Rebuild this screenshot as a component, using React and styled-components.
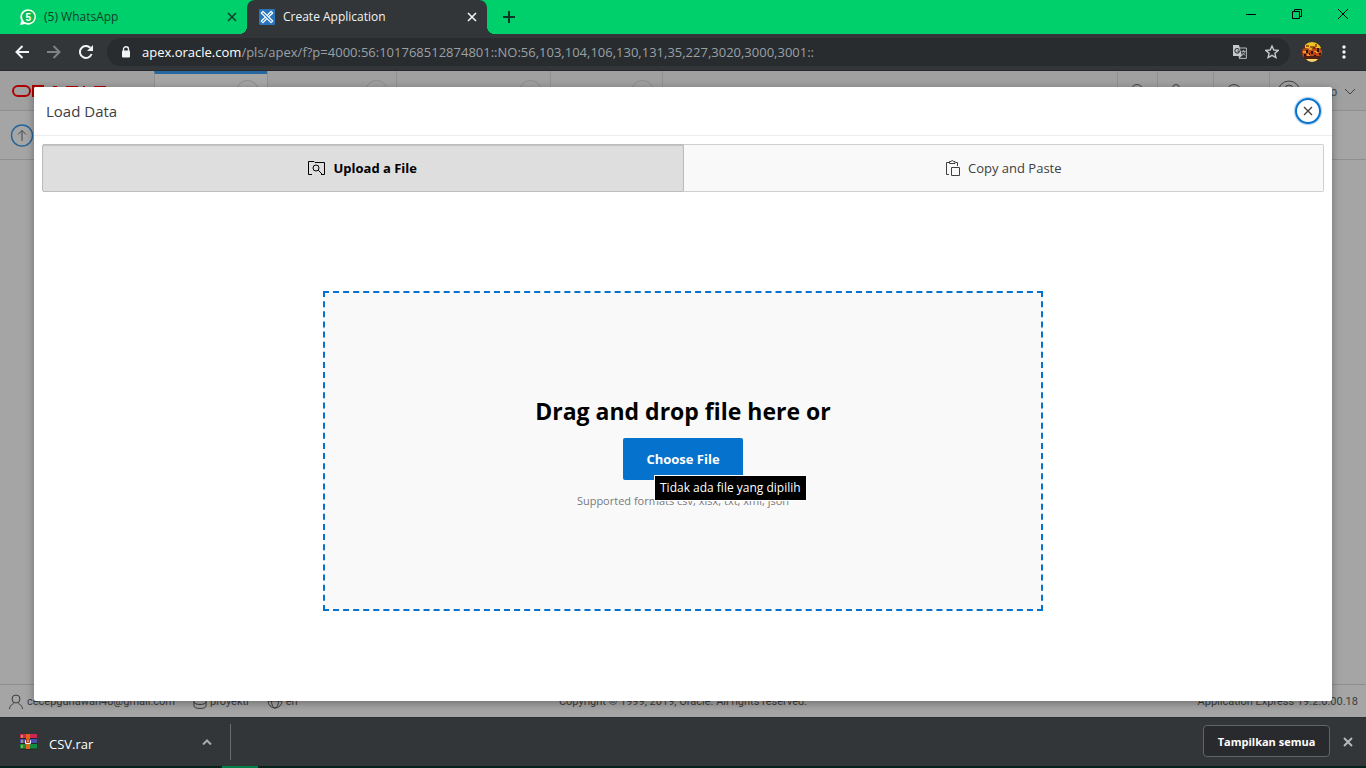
import React from 'react';
import styled, { createGlobalStyle, css } from 'styled-components';

const ui = '"Segoe UI", "Open Sans", "Noto Sans", sans-serif';

const Global = createGlobalStyle`
  *, *::before, *::after { box-sizing: border-box; }
  body { margin: 0; font-family: ${ui}; font-size: 12px; color: #404040; }
  button { font: inherit; color: inherit; border: 0; padding: 0; background: none; }
  a { color: inherit; text-decoration: none; }
  svg { display: block; flex: none; }
`;

const Window = styled.div`
  display: flex;
  flex-direction: column;
  min-height: 100vh;
  background: #323639;
`;

/* Browser frame */
const TabStrip = styled.div`
  display: flex;
  height: 34px;
  background: #00d06c;
`;

const flare = css`
  content: '';
  position: absolute;
  bottom: 0;
  width: 8px;
  height: 8px;
`;

const BrowserTab = styled.div`
  position: relative;
  display: flex;
  align-items: center;
  gap: 8px;
  width: ${(p) => (p.$active ? 240 : 247)}px;
  padding: 0 10px 0 ${(p) => (p.$active ? 12 : 20)}px;
  font-size: 12px;
  line-height: 16px;
  color: #123f29;
  ${(p) => p.$active && css`
    color: #f1f3f4;
    background: #323639;
    border-radius: 8px 8px 0 0;
    &::before { ${flare} left: -8px; background: radial-gradient(circle at 0 0, transparent 8px, #323639 8px); }
    &::after { ${flare} right: -8px; background: radial-gradient(circle at 100% 0, transparent 8px, #323639 8px); }
  `}
`;

const TabTitle = styled.span`
  flex: 1;
`;

const IconButton = styled.button`
  display: flex;
  align-items: center;
  justify-content: center;
  width: ${(p) => p.$w || 32}px;
  height: ${(p) => p.$h || 32}px;
  color: ${(p) => p.$color || 'inherit'};
`;

const NewTab = styled(IconButton)`
  margin-left: 6px;
`;

const WindowButtons = styled.div`
  display: flex;
  margin-left: auto;
`;

const Toolbar = styled.div`
  display: flex;
  align-items: center;
  height: 37px;
  padding: 0 6px;
  color: #f1f3f4;
  border-bottom: 1px solid #27292c;
`;

const AddressBar = styled.div`
  display: flex;
  flex: 1;
  align-items: center;
  height: 28px;
  margin: 0 6px 0 5px;
  padding: 0 2px 0 14px;
  border-radius: 14px;
  background: #282c2f;
`;

const Address = styled.input`
  flex: 1;
  min-width: 0;
  padding: 0;
  border: 0;
  outline: 0;
  background: none;
  font-family: ${ui};
  font-size: 13px;
  color: #9aa0a6;
`;

const Host = styled.label`
  margin-left: 11px;
  font-size: 13px;
  color: #fff;
`;

/* Application page behind the dialog */
const Page = styled.main`
  position: relative;
  display: flex;
  flex: 1;
  flex-direction: column;
  background: #a5a5a5;
  overflow: hidden;
`;

const AppHeader = styled.header`
  display: flex;
  height: 40px;
  background: #a0a0a0;
  border-bottom: 1px solid #8f8f8f;
`;

const Logo = styled.a`
  width: 154px;
  padding: 14px 0 0 12px;
`;

const NavTab = styled.a`
  display: flex;
  justify-content: flex-end;
  width: ${(p) => p.$w}px;
  padding: 9px 8px 0 0;
  border-left: 1px solid #909090;
  ${(p) => p.$last && css`border-right: 1px solid #909090;`}
  ${(p) => p.$active && css`
    background: #a6a6a6;
    padding-top: 6px;
    border-top: 3px solid #2568a0;
  `}
`;

const Ring = styled.span`
  width: 23px;
  height: 23px;
  border: 1px solid #8c8c8c;
  border-radius: 50%;
`;

const HeaderTools = styled.div`
  display: flex;
  margin-left: auto;
  border-left: 1px solid #909090;
`;

const HeaderTool = styled.button`
  display: flex;
  align-items: center;
  justify-content: center;
  width: ${(p) => p.$w}px;
  padding: 2px ${(p) => p.$right || 0}px 0 0;
  border-left: 1px solid #909090;
  &:first-child { border-left: 0; }
`;

const UserMenu = styled(HeaderTool)`
  justify-content: flex-start;
  gap: 4px;
  padding: 2px 10px 0 7px;
`;

const UserName = styled.span`
  margin-left: auto;
  padding-right: 3px;
  color: #404040;
`;

const Breadcrumb = styled.nav`
  height: 49px;
  padding: 13px 10px;
  border-bottom: 1px solid #8f8f8f;
`;

const PageFooter = styled.footer`
  display: grid;
  grid-template-columns: 1fr auto 1fr;
  align-items: center;
  height: 33px;
  margin-top: auto;
  padding: 2px 8px 0;
  border-top: 1px solid #8f8f8f;
  font-family: Roboto, "Open Sans", sans-serif;
  font-size: 11px;
  line-height: 16px;
  color: #3c3c3c;
`;

const FooterInfo = styled.div`
  display: flex;
  gap: 18px;
`;

const FooterItem = styled.span`
  display: flex;
  align-items: center;
  gap: 3px;
`;

const FooterEnd = styled.span`
  text-align: right;
`;

/* Dialog */
const Dialog = styled.section`
  position: absolute;
  inset: 16px 34px;
  display: flex;
  flex-direction: column;
  border-radius: 2px;
  background: #fff;
  box-shadow: 0 2px 8px rgba(0, 0, 0, 0.35);
`;

const DialogHeader = styled.header`
  display: flex;
  align-items: center;
  justify-content: space-between;
  height: 49px;
  padding: 0 11px 0 12px;
  border-bottom: 1px solid #ededed;
`;

const DialogTitle = styled.h1`
  margin: 0;
  font-size: 15px;
  font-weight: 500;
  line-height: 24px;
  color: #404040;
`;

const CloseButton = styled.button`
  display: flex;
  align-items: center;
  justify-content: center;
  width: 26px;
  height: 26px;
  border: 2px solid #0572ce;
  border-radius: 50%;
  box-shadow: 0 0 1px 1px rgba(5, 114, 206, 0.35);
`;

const DialogBody = styled.div`
  display: flex;
  flex: 1;
  flex-direction: column;
  padding: 8px;
`;

const Methods = styled.div`
  display: flex;
  height: 48px;
`;

const Method = styled.button`
  display: flex;
  flex: 1;
  align-items: center;
  justify-content: center;
  gap: 7px;
  font-size: 13px;
  line-height: 20px;
  color: #404040;
  background: #f9f9f9;
  border: 1px solid #cfcfcf;
  border-left: 0;
  border-radius: 0 2px 2px 0;
  ${(p) => p.$active && css`
    color: #000;
    font-weight: 700;
    background: #dedede;
    border: 1px solid #bcbcbc;
    border-radius: 2px 0 0 2px;
    box-shadow: inset 0 1px 1px rgba(0, 0, 0, 0.12);
  `}
`;

const DropZone = styled.div`
  display: flex;
  flex-direction: column;
  align-items: center;
  justify-content: center;
  width: 720px;
  max-width: 100%;
  height: 320px;
  margin: 99px auto 0;
  border: 2px dashed #0572ce;
  background: #f9f9f9;
`;

const DropTitle = styled.h2`
  margin: 0 0 9px;
  font-size: 23px;
  font-weight: 700;
  line-height: 36px;
  color: #000;
`;

const ChooseWrap = styled.div`
  position: relative;
  margin-bottom: 13px;
`;

const ChooseButton = styled.button`
  width: 120px;
  height: 42px;
  border-radius: 2px;
  background: #0572ce;
  color: #fff;
  font-size: 13px;
  font-weight: 700;
`;

const Tooltip = styled.span`
  position: absolute;
  top: 37px;
  left: 31px;
  padding: 3px 5px;
  border: 1px solid #fff;
  background: #000;
  color: #fff;
  font-size: 12px;
  line-height: 18px;
  white-space: nowrap;
`;

const Formats = styled.p`
  margin: 0;
  font-size: 11px;
  line-height: 16px;
  color: #7a7a7a;
`;

/* Download shelf and taskbar edge */
const Shelf = styled.div`
  display: flex;
  align-items: center;
  height: 49px;
  padding: 0 8px 0 20px;
  border-top: 1px solid #2b2d30;
  color: #fff;
`;

const Download = styled.div`
  display: flex;
  align-items: center;
  gap: 12px;
  width: 211px;
  height: 36px;
  padding-right: 7px;
  border-right: 1px solid #6b6e71;
  font-size: 13px;
`;

const FileName = styled.a`
  flex: 1;
  padding-top: 4px;
`;

const ShowAll = styled.button`
  height: 32px;
  width: 127px;
  margin: 0 8px 2px auto;
  border: 1px solid #606367;
  border-radius: 4px;
  background: #292a2d;
  font-size: 11px;
  font-weight: 700;
`;

const Taskbar = styled.div`
  height: 2px;
  padding-left: 222px;
  background: #03241a;
`;

const TaskActive = styled.div`
  width: 36px;
  height: 2px;
  background: #008048;
`;

const Icon = ({ w = 16, h = w, sw = 1, children, ...rest }) => (
  <svg width={w} height={h} viewBox={`0 0 ${w} ${h}`} fill="none" stroke="currentColor" strokeWidth={sw} aria-hidden="true" {...rest}>
    {children}
  </svg>
);

const Cross = ({ size, sw }) => (
  <Icon w={size} sw={sw}><path d={`M1 1L${size - 1} ${size - 1}M${size - 1} 1L1 ${size - 1}`} /></Icon>
);

const WhatsApp = () => (
  <svg width="16" height="16" viewBox="0 0 16 16" aria-hidden="true">
    <path d="M8.3.2A7.7 7.7 0 1 1 5 14.9L.2 16l1-4.6A7.7 7.7 0 0 1 8.3.2z" fill="#fff" />
    <circle cx="8.3" cy="7.9" r="6.2" fill="#0cbf4d" />
    <text x="8.3" y="11.6" fontFamily="Liberation Sans, sans-serif" fontSize="10" fontWeight="700" fill="#fff" textAnchor="middle">5</text>
  </svg>
);

const Apex = () => (
  <svg width="16" height="16" viewBox="0 0 16 16" fill="none" aria-hidden="true">
    <rect width="16" height="16" rx="1" fill="#2a74bd" />
    <path d="M4 2.300L2.300 4 12 13.700 13.700 12zM9 5.500L12 2.300 13.700 4 10.500 7M5.500 9L2.300 12 4 13.700 7 10.500" stroke="#fff" strokeWidth="1.200" strokeLinejoin="round" strokeLinecap="round" />
  </svg>
);

const Translate = () => (
  <svg width="14" height="14" viewBox="0 0 14 14" fill="none" aria-hidden="true">
    <path d="M6 3h7.4v10.4H6" stroke="#b8bbbe" />
    <path d="M0 0h6l3 11H0z" fill="#c7c9cc" />
    <path d="M6.2 4.6A2.3 2.3 0 1 0 6.5 6H4.3" stroke="#35383b" strokeWidth="1.1" />
    <path d="M8.5 6.3h4M10.5 5.2v1M11.8 6.3c-.3 1.8-1.3 3-2.8 4M9.3 7.5l2.7 3" stroke="#b8bbbe" />
    <path d="M6 13.4L8.8 11H5.5z" fill="#b8bbbe" />
  </svg>
);

const Avatar = () => (
  <svg width="20" height="20" viewBox="0 0 20 20" aria-hidden="true">
    <defs><clipPath id="avatar"><circle cx="10" cy="10" r="10" /></clipPath></defs>
    <g clipPath="url(#avatar)">
      <rect width="20" height="20" fill="#6d2410" />
      <path d="M3 0h14l3 6-5 1-3-3-4 3-5-1z" fill="#e8c81f" />
      <path d="M4 3h3v2H4zM13 2h2v3h-2zM8 4h3v2H8z" fill="#a8561a" />
      <path d="M0 7l4-1 2 2 3-3 3 2 3-1 5 2v5l-6 2-7-1-7 1z" fill="#b94d17" />
      <path d="M1 9h3v2H1zM7 6h3v2H7zM12 9h4v2h-4zM5 12h3v2H5z" fill="#ee9a31" />
      <path d="M4 8h2v3H4zM9 9h2v3H9zM15 6h2v4h-2zM2 12h2v2H2zM7 11h1v2H7zM12 12h2v2h-2zM17 11h2v2h-2z" fill="#32130e" />
      <path d="M11 10h3v3h-3z" fill="#d2301c" />
      <path d="M2 14h16v3H2z" fill="#512012" />
      <path d="M4 17h12l-3 3H7z" fill="#f3d66c" />
    </g>
  </svg>
);

const Rar = () => (
  <svg width="17" height="16" viewBox="0 0 17 16" aria-hidden="true">
    <rect x="0" y="0" width="17" height="5" fill="#cf2650" />
    <rect x="0" y="5" width="17" height="5" fill="#4b4fae" />
    <rect x="0" y="10" width="17" height="5" fill="#138c3d" />
    <path d="M0 4.5h17M0 9.5h17M0 15h17" stroke="#24242c" />
    <path d="M2 1v3M2 6v3M2 11v3" stroke="#f2d94a" />
    <rect x="6" y="0" width="4" height="15" fill="#e0641c" />
    <rect x="5" y="6" width="6" height="4" rx="1" fill="#eee" />
    <path d="M6.500 5v3.500h3V5M8 5.500v3" stroke="#b5361b" fill="none" />
  </svg>
);

const OracleLogo = () => (
  <svg width="96" height="13" viewBox="0 0 96 13" aria-hidden="true">
    <rect x="1" y="1" width="17" height="10" rx="5" fill="none" stroke="#b00000" strokeWidth="2" />
    <path d="M20 0h12v2H22v10h-2zM41 1h4v1h-4zM54 1h12v1H54zM71 1h2v1h-2zM82 1h12v1H82z" fill="#b00000" />
  </svg>
);

export default function App() {
  return (
    <>
      <Global />
      <Window>
        <TabStrip>
          <BrowserTab>
            <WhatsApp />
            <TabTitle>(5) WhatsApp</TabTitle>
            <IconButton $w={10} $h={16} aria-label="Close tab"><Cross size={10} sw={1.6} /></IconButton>
          </BrowserTab>
          <BrowserTab $active>
            <Apex />
            <TabTitle>Create Application</TabTitle>
            <IconButton $w={10} $h={16} aria-label="Close tab"><Cross size={10} sw={1.6} /></IconButton>
          </BrowserTab>
          <NewTab $color="#0d3523" $h={34} aria-label="New tab">
            <Icon w={12} sw={2}><path d="M6 0v12M0 6h12" /></Icon>
          </NewTab>
          <WindowButtons>
            <IconButton $w={46} $h={28} $color="#000" aria-label="Minimize"><Icon w={10}><path d="M0 5.5h10" /></Icon></IconButton>
            <IconButton $w={46} $h={28} $color="#000" aria-label="Restore"><Icon w={10}><path d="M.5 2.5h7v7h-7zM2.5 2.5v-2h7v7h-2" /></Icon></IconButton>
            <IconButton $w={46} $h={28} $color="#000" aria-label="Close"><Icon w={10}><path d="M0 0l10 10M10 0L0 10" /></Icon></IconButton>
          </WindowButtons>
        </TabStrip>

        <Toolbar>
          <IconButton aria-label="Back"><Icon w={14} sw={2}><path d="M14 7H1.5M7.5 1L1.5 7l6 6" /></Icon></IconButton>
          <IconButton $color="#7f8285" aria-label="Forward"><Icon w={14} sw={2}><path d="M0 7h12.500M6.500 1l6 6-6 6" /></Icon></IconButton>
          <IconButton aria-label="Reload">
            <Icon w={14} sw={2}><path d="M12.600 9A6 6 0 1 1 11.300 2.800" /><path d="M14 0v6H8z" fill="currentColor" stroke="none" /></Icon>
          </IconButton>
          <AddressBar>
            <Icon w={10} h={12} sw={1.4}><path d="M2.500 5V3.200a2.500 2.500 0 0 1 5 0V5" /><rect x="1" y="4.500" width="8" height="7" rx="1" fill="currentColor" stroke="none" /></Icon>
            <Host htmlFor="address">apex.oracle.com</Host>
            <Address id="address" readOnly value="/pls/apex/f?p=4000:56:101768512874801::NO:56,103,104,106,130,131,35,227,3020,3000,3001::" />
            <IconButton aria-label="Translate"><Translate /></IconButton>
            <IconButton $color="#c6c8ca" aria-label="Bookmark">
              <Icon w={14} sw={1.4}><path d="M7 1l1.800 4 4.400.4-3.300 2.900 1 4.300L7 10.400l-3.900 2.200 1-4.300L.8 5.400 5.200 5z" /></Icon>
            </IconButton>
          </AddressBar>
          <IconButton aria-label="Profile"><Avatar /></IconButton>
          <IconButton aria-label="Menu"><Icon w={4} h={14}><g fill="currentColor" stroke="none"><circle cx="2" cy="2" r="1.700" /><circle cx="2" cy="7" r="1.700" /><circle cx="2" cy="12" r="1.700" /></g></Icon></IconButton>
        </Toolbar>

        <Page>
          <AppHeader>
            <Logo href="#" aria-label="Oracle"><OracleLogo /></Logo>
            <NavTab href="#" $w={113} $active aria-label="App Builder"><Ring /></NavTab>
            <NavTab href="#" $w={129} aria-label="SQL Workshop"><Ring /></NavTab>
            <NavTab href="#" $w={154} aria-label="Team Development"><Ring /></NavTab>
            <NavTab href="#" $w={113} $last aria-label="App Gallery"><Ring /></NavTab>
            <HeaderTools>
              <HeaderTool $w={39} $right={2} aria-label="Search"><Icon><circle cx="8" cy="6" r="5.500" /><path d="M12 10l4 4" /></Icon></HeaderTool>
              <HeaderTool $w={56} $right={20} aria-label="Administration"><Icon><circle cx="8" cy="4" r="3.500" /><path d="M2 15c0-6 12-6 12 0" /></Icon></HeaderTool>
              <HeaderTool $w={56} $right={16} aria-label="Help"><Icon><circle cx="8" cy="8" r="7.500" /></Icon></HeaderTool>
              <UserMenu $w={97}>
                <Icon w={24}><circle cx="12" cy="12" r="11" /><circle cx="12" cy="9" r="4" /></Icon>
                <UserName>cecep</UserName>
                <Icon w={12} h={8}><path d="M1 1l5 5 5-5" /></Icon>
              </UserMenu>
            </HeaderTools>
          </AppHeader>
          <Breadcrumb>
            <Icon w={24} h={23} color="#25659a">
              <circle cx="12" cy="11.500" r="10.500" strokeWidth="1.400" />
              <path d="M12 17V6.500M8 10.500l4-4 4 4" stroke="#454545" />
            </Icon>
          </Breadcrumb>
          <PageFooter>
            <FooterInfo>
              <FooterItem><Icon w={16}><circle cx="8" cy="5" r="4" /><path d="M1.500 15c.5-4 3-5 4.500-5.500M14.500 15c-.5-4-3-5-4.500-5.500" /></Icon>cecepgunawan48@gmail.com</FooterItem>
              <FooterItem><Icon w={14}><ellipse cx="7" cy="3" rx="6" ry="2.500" /><path d="M1 3v8c0 3.300 12 3.300 12 0V3M1 7c0 3.300 12 3.300 12 0" /></Icon>proyekti</FooterItem>
              <FooterItem><Icon w={16}><circle cx="8" cy="7" r="7" /><ellipse cx="8" cy="7" rx="3.500" ry="7" /><path d="M1 7h14" /></Icon>en</FooterItem>
            </FooterInfo>
            <span>Copyright © 1999, 2019, Oracle. All rights reserved.</span>
            <FooterEnd>Application Express 19.2.0.00.18</FooterEnd>
          </PageFooter>

          <Dialog role="dialog" aria-labelledby="dialog-title">
            <DialogHeader>
              <DialogTitle id="dialog-title">Load Data</DialogTitle>
              <CloseButton aria-label="Close"><Cross size={10} sw={1.3} /></CloseButton>
            </DialogHeader>
            <DialogBody>
              <Methods>
                <Method $active aria-pressed="true">
                  <Icon w={18} h={16}><path d="M4 14.500H.5V1.500H6l1 1h9.500v12H13" /><circle cx="8" cy="8" r="3" /><path d="M10.200 10.200l4.300 4.300" /></Icon>
                  Upload a File
                </Method>
                <Method aria-pressed="false">
                  <Icon w={16}><path d="M4 14.500H1.500v-12H4M10.500 2.500h2V6M4.500 1.500h1.600c.2-1.300 2.100-1.300 2.300 0H10v2H4.500zM6.500 7.500h8v8h-8z" /></Icon>
                  Copy and Paste
                </Method>
              </Methods>
              <DropZone>
                <DropTitle>Drag and drop file here or</DropTitle>
                <ChooseWrap>
                  <ChooseButton aria-describedby="file-tip">Choose File</ChooseButton>
                  <Tooltip role="tooltip" id="file-tip">Tidak ada file yang dipilih</Tooltip>
                </ChooseWrap>
                <Formats>Supported formats csv, xlsx, txt, xml, json</Formats>
              </DropZone>
            </DialogBody>
          </Dialog>
        </Page>

        <Shelf>
          <Download>
            <Rar />
            <FileName href="#">CSV.rar</FileName>
            <IconButton $w={32} $color="#a9acaf" aria-label="Download options"><Icon w={10} h={6} sw={2}><path d="M1 5.500l4-4 4 4" /></Icon></IconButton>
          </Download>
          <ShowAll>Tampilkan semua</ShowAll>
          <IconButton $w={20} $color="#b6b8ba" aria-label="Close downloads bar"><Cross size={10} sw={2} /></IconButton>
        </Shelf>
        <Taskbar><TaskActive /></Taskbar>
      </Window>
    </>
  );
}
